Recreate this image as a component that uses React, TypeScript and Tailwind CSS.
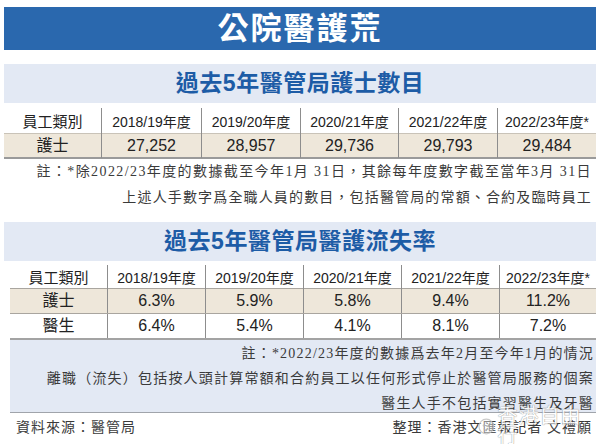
const years = ["2018/19年度", "2019/20年度", "2020/21年度", "2021/22年度", "2022/23年度*"]

const nurseCount = ["27,252", "28,957", "29,736", "29,793", "29,484"]

const lossRows = [
    {label: "護士", values: ["6.3%", "5.9%", "5.8%", "9.4%", "11.2%"], beige: true},
    {label: "醫生", values: ["6.4%", "5.4%", "4.1%", "8.1%", "7.2%"], beige: false},
]

const sans = "font-['Liberation_Sans','Noto_Sans_CJK_TC',sans-serif]"
const serif = "font-['Liberation_Serif','Noto_Sans_CJK_TC',serif]"

function SectionTitle({children}: {children: string}) {
    return (
        <div className="h-[39px] bg-[#e3e9f4] flex items-center justify-center">
            <h2 className={`${sans} text-[23px] font-bold tracking-[0.5px] text-[#1d5ca6] leading-none`}>{children}</h2>
        </div>
    )
}

function Cell({children, first, className = ""}: {children: string; first?: boolean; className?: string}) {
    return (
        <div className={`flex items-center justify-center ${first ? "" : "border-l border-[#8d8d8d]"} ${className}`}>
            {children}
        </div>
    )
}

export default function App() {
    return (
        <div className={`relative w-[600px] h-[444px] bg-white px-1 pt-[7px] overflow-hidden ${sans}`}>
            {/* Main title */}
            <div className="h-[43px] bg-[#2a68ae] flex items-center justify-center">
                <h1 className="text-[31px] font-bold tracking-[2px] text-white leading-none">公院醫護荒</h1>
            </div>

            {/* Section 1 */}
            <div className="mt-[14px]">
                <SectionTitle>過去5年醫管局護士數目</SectionTitle>
                <div className="grid grid-cols-[97px_100px_99px_98px_99px_99px] mt-[5px] h-[25px] text-[#222]">
                    <Cell first className="text-[15px] pt-[3px]">員工類別</Cell>
                    {years.map((y) => (
                        <Cell key={y} className="text-[14px] pt-[3px]">{y}</Cell>
                    ))}
                </div>
                <div className="grid grid-cols-[97px_100px_99px_98px_99px_99px] h-[26px] bg-[#eee7da] border-t border-[#c9c3b8] border-b-2 border-b-[#9a9a9a] text-[16px] text-[#222]">
                    <Cell first>護士</Cell>
                    {nurseCount.map((n) => (
                        <Cell key={n}>{n}</Cell>
                    ))}
                </div>
                <div className={`${serif} text-right pr-1 text-[14px] leading-[26px] text-[#3a3a3a]`}>
                    <p className="tracking-[1.4px]">註：*除2022/23年度的數據截至今年1月 31日，其餘每年度數字截至當年3月 31日</p>
                    <p className="tracking-[1.15px]">上述人手數字爲全職人員的數目，包括醫管局的常額、合約及臨時員工</p>
                </div>
            </div>

            {/* Section 2 */}
            <div className="mt-[11px]">
                <SectionTitle>過去5年醫管局醫護流失率</SectionTitle>
                <div className="ml-[6px]">
                    <div className="grid grid-cols-[97px_98px_98px_98px_98px_97px] mt-[4px] h-[23px] text-[#222]">
                        <Cell first className="text-[15px] pt-[2px]">員工類別</Cell>
                        {years.map((y) => (
                            <Cell key={y} className="text-[14px] pt-[2px]">{y}</Cell>
                        ))}
                    </div>
                    {lossRows.map((row) => (
                        <div
                            key={row.label}
                            className={`grid grid-cols-[97px_98px_98px_98px_98px_97px] h-[25px] border-t border-[#a9a59f] text-[16px] text-[#222] ${row.beige ? "bg-[#eee7da]" : "bg-white"}`}
                        >
                            <Cell first>{row.label}</Cell>
                            {row.values.map((v, i) => (
                                <Cell key={i}>{v}</Cell>
                            ))}
                        </div>
                    ))}
                    <div
                        className={`h-[75px] bg-[#e3e9f4] border-t-2 border-[#a3a3a3] border-b border-b-[#a0a4ab] pt-[1px] pr-[2px] ${serif} text-right text-[14px] leading-[25px] tracking-[1.2px] text-[#3a3a3a]`}
                    >
                        <p>註：*2022/23年度的數據爲去年2月至今年1月的情況</p>
                        <p>離職（流失）包括按人頭計算常額和合約員工以任何形式停止於醫管局服務的個案</p>
                        <p>醫生人手不包括實習醫生及牙醫</p>
                    </div>
                </div>
            </div>

            {/* Footer */}
            <div className={`flex justify-between pl-[12px] pr-1 h-[28px] items-center ${serif} text-[14px] tracking-[1px] text-[#3a3a3a]`}>
                <span>資料來源：醫管局</span>
                <span>整理：香港文匯報記者&nbsp;文禮願</span>
            </div>

            {/* Watermark */}
            <div className="absolute left-[478px] top-[406px] flex items-center gap-[3px] opacity-80 pointer-events-none">
                <svg width="17" height="17" viewBox="0 0 17 17" fill="none">
                    <circle cx="8.5" cy="8.5" r="7.5" stroke="#bfbfbf" strokeWidth="1.2" fill="#ffffff" fillOpacity="0.5"/>
                    <circle cx="6" cy="7.5" r="1.2" fill="#c4c4c4"/>
                    <circle cx="11" cy="7.5" r="1.2" fill="#c4c4c4"/>
                    <path d="M5.5 11 Q8.5 13 11.5 11" stroke="#c4c4c4" strokeWidth="1" fill="none"/>
                </svg>
                <span className="text-[20px] leading-none text-white tracking-[1px] [text-shadow:0_0_1px_#8a8a8a,0_0_1px_#8a8a8a]">
                    香港自由行
                </span>
            </div>
        </div>
    )
}
